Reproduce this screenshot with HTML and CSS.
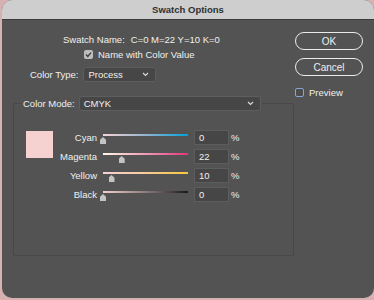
FILE: index.html
```html
<!DOCTYPE html>
<html>
<head>
	<title>Swatch Options</title>
	<meta charset="utf-8">
	<link rel="stylesheet" href="styles.css">
</head>
<body>

	<div class="window">
		<div class="titlebar">Swatch Options</div>

		<div class="content">
			<div class="main">
				<div class="name-row">Swatch Name:<span class="name-val">C=0 M=22 Y=10 K=0</span></div>

				<label class="check-row">
					<span class="check on">
						<svg width="9" height="9" viewBox="0 0 9 9"><polyline points="2,4.6 3.8,6.4 7,2.6" fill="none" stroke="#3c3c3c" stroke-width="1.4"/></svg>
					</span>
					Name with Color Value
				</label>

				<div class="type-row">
					<span class="lbl">Color Type:</span>
					<div class="select sel-type">
						<span>Process</span>
						<svg class="chev" width="7" height="5" viewBox="0 0 7 5"><polyline points="1,1 3.5,3.5 6,1" fill="none" stroke="#dcdcdc" stroke-width="1.1"/></svg>
					</div>
				</div>

				<fieldset class="group">
					<legend>
						<span class="lbl">Color Mode:</span>
						<div class="select sel-mode">
							<span>CMYK</span>
							<svg class="chev" width="7" height="5" viewBox="0 0 7 5"><polyline points="1,1 3.5,3.5 6,1" fill="none" stroke="#dcdcdc" stroke-width="1.1"/></svg>
						</div>
					</legend>

					<div class="mix">
						<div class="swatch"></div>
						<div class="sliders">
							<span class="s-lbl">Cyan</span>
							<div class="slider"><div class="track cyan"></div><div class="thumb" style="margin-left: calc(0% - 3px)"></div></div>
							<div class="field">0</div>
							<span class="pct">%</span>

							<span class="s-lbl">Magenta</span>
							<div class="slider"><div class="track magenta"></div><div class="thumb" style="margin-left: calc(22% - 3px)"></div></div>
							<div class="field">22</div>
							<span class="pct">%</span>

							<span class="s-lbl">Yellow</span>
							<div class="slider"><div class="track yellow"></div><div class="thumb" style="margin-left: calc(10% - 3px)"></div></div>
							<div class="field">10</div>
							<span class="pct">%</span>

							<span class="s-lbl">Black</span>
							<div class="slider"><div class="track black"></div><div class="thumb" style="margin-left: calc(0% - 3px)"></div></div>
							<div class="field">0</div>
							<span class="pct">%</span>
						</div>
					</div>
				</fieldset>
			</div>

			<div class="side">
				<button class="btn btn-ok">OK</button>
				<button class="btn">Cancel</button>
				<label class="preview"><span class="check"></span>Preview</label>
			</div>
		</div>
	</div>

</body>
</html>
```

FILE: styles.css
```css
*, *:before, *:after { box-sizing: border-box; }

body { margin: 0; background-color: #d7b1b1; font-family: "Liberation Sans", Arial, sans-serif; font-size: 9.5px; color: #f0f0f0; overflow: hidden; }

.window {
	margin-left: 2px; width: 372px; height: 298px;
	background-color: #535353; border-radius: 10px; overflow: hidden;
}

.titlebar {
	height: 20px; line-height: 19px; text-align: center;
	background-color: #cecece; border-bottom: 1px solid #3d3d3d;
	color: #303030; font-weight: bold;
}

.content { display: flex; padding-left: 11px; }

.main { width: 281px; }

.name-row { margin-top: 13px; padding-left: 50px; line-height: 14px; }
.name-val { margin-left: 6px; }

.check-row { display: flex; align-items: center; gap: 5px; padding-left: 71px; height: 14px; }

.check { display: block; width: 9px; height: 9px; border-radius: 2px; }
.check.on { background-color: #bdbdbd; }
.check svg { display: block; }

.type-row { display: flex; align-items: center; gap: 5px; margin-top: 6px; padding-left: 17px; }

.select {
	display: flex; align-items: center; justify-content: space-between;
	height: 15px; padding: 0 6px 0 4px;
	background-color: #464646; border: 1px solid #5e5e5e; border-radius: 3px;
}
.sel-type { width: 73px; }
.sel-mode { width: 182px; }
.chev { display: block; }

.group {
	margin: 14px 0 0 0; padding: 19px 0 53px 0;
	border: 1px solid #484848; border-radius: 2px;
}
.group legend { display: flex; align-items: center; gap: 4px; margin-left: 7px; padding: 0 1px 0 2px; }

.mix { display: flex; align-items: flex-start; }

.swatch { width: 27px; height: 27px; margin: 1px 0 0 12px; background-color: #f5d1d0; }

.sliders {
	display: grid; grid-template-columns: 44px 85px 35px auto;
	grid-auto-rows: 15px; column-gap: 6px; row-gap: 4px; align-items: center;
}

.s-lbl { text-align: right; }

.slider { align-self: stretch; padding-top: 4px; }
.track { height: 2px; }
.track.cyan { background: linear-gradient(to right, #f6d4d4, #9fb6cf 45%, #02a3d9); }
.track.magenta { background: linear-gradient(to right, #fff8e6, #f0a6bb 45%, #e5357b); }
.track.yellow { background: linear-gradient(to right, #f6d1d6, #f6cda0 45%, #f9c73a); }
.track.black { background: linear-gradient(to right, #f4d0d0, #8e7d7d 50%, #181818); }

.thumb {
	width: 6px; height: 7px; margin-top: 1px;
	background-color: #c4c4c4;
	clip-path: polygon(50% 0, 100% 40%, 100% 100%, 0 100%, 0 40%);
}

.field {
	height: 15px; line-height: 13px; padding-left: 4px;
	background-color: #464646; border: 1px solid #5d5d5d;
}
.pct { margin-left: -4px; }

.side { display: flex; flex-direction: column; align-items: flex-start; margin-left: 1px; }

.btn {
	width: 68px; height: 18px; padding: 0;
	background-color: transparent; border: 1.5px solid #ececec; border-radius: 9px;
	color: #f0f0f0; font-family: inherit; font-size: 10px;
}
.btn-ok { margin-top: 12px; }
.btn + .btn { margin-top: 8px; }

.preview { display: flex; align-items: center; gap: 5px; margin-top: 9px; height: 14px; }
.preview .check { border: 1px solid #86a7d6; background-color: #4c4c4c; }
```
